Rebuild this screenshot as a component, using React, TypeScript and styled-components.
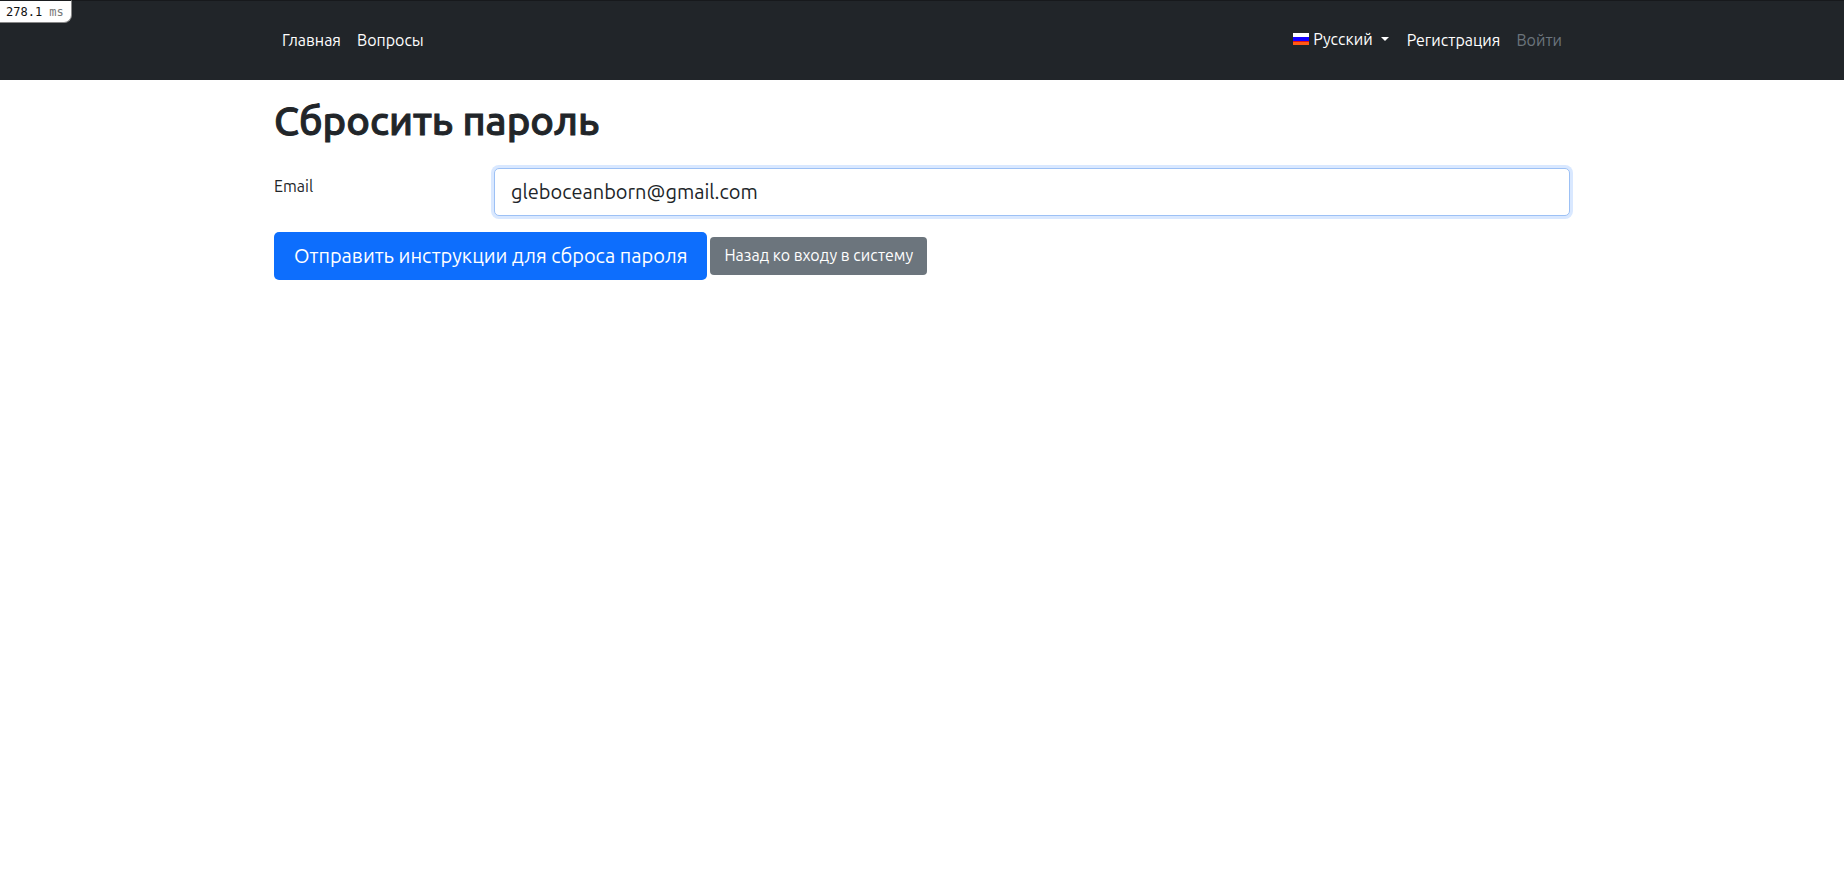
import React, { useState } from "react";
import styled, { createGlobalStyle } from "styled-components";

const GlobalStyle = createGlobalStyle`
  *, *::before, *::after { box-sizing: border-box; }
  body {
    margin: 0;
    background: #fff;
    color: #212529;
    font-family: Ubuntu, "Noto Sans", "Open Sans", sans-serif;
    font-size: 16px;
    line-height: 24px;
  }
`;

const Container = styled.div`
  width: 100%;
  max-width: 1320px;
  margin: 0 auto;
  padding: 0 12px;
`;

const ProfilerBadge = styled.div`
  position: absolute;
  top: 0;
  left: 0;
  padding: 4px 7px 3px 6px;
  background: #fff;
  border: solid #888;
  border-width: 1px 1px 1px 0;
  border-top-color: #1b1d20;
  border-bottom-right-radius: 8px;
  color: #111;
  font-family: "DejaVu Sans Mono", monospace;
  font-size: 12px;
  line-height: 14px;
  white-space: pre;
`;

const Unit = styled.span`
  color: #777;
`;

const Navbar = styled.header`
  background: #212529;
  border-top: 1px solid #17191c;
`;

const NavInner = styled(Container)`
  display: flex;
  align-items: center;
  justify-content: space-between;
  padding-top: 19px;
  padding-bottom: 20px;
`;

const NavGroup = styled.nav`
  display: flex;
  align-items: center;
`;

const NavLink = styled.a<{ $muted?: boolean }>`
  padding: 8px;
  color: ${(p) => (p.$muted ? "#6c757d" : "#fff")};
  text-decoration: none;
`;

const LanguageToggle = styled.button`
  display: flex;
  align-items: center;
  padding: 7px 10px 9px 8px;
  border: 0;
  background: none;
  color: #fff;
  font: inherit;
  cursor: pointer;
`;

const Flag = styled.svg`
  width: 16px;
  height: 12px;
  margin-right: 4px;
`;

const Caret = styled.span`
  margin-left: 8px;
  border: 4px solid transparent;
  border-top-color: #fff;
  border-bottom: 0;
`;

const Title = styled.h1`
  margin: 17px 0 0;
  font-size: 40px;
  font-weight: 500;
  line-height: 48px;
  -webkit-text-stroke: 1px currentColor;
`;

const Field = styled.div`
  display: flex;
  gap: 24px;
  margin: 23px 0 16px;
`;

const Label = styled.label`
  flex: 0 0 calc((100% + 24px) / 6 - 24px);
  padding-top: 6px;
`;

const EmailInput = styled.input`
  flex: 1;
  min-width: 0;
  height: 48px;
  padding: 7px 16px 9px;
  border: 1px solid #9dc1f5;
  border-radius: 5px;
  outline: 0;
  box-shadow: 0 0 0 3px #d9e8ff;
  background: #fff;
  color: #212529;
  font: inherit;
  font-size: 20px;
  line-height: 30px;
`;

const Actions = styled.div`
  display: flex;
  align-items: center;
  gap: 3px;
`;

const SubmitButton = styled.button`
  height: 48px;
  padding: 0 20px;
  border: 0;
  border-radius: 5px;
  background: #0d6efd;
  color: #fff;
  font: inherit;
  font-size: 20px;
  line-height: 30px;
  cursor: pointer;
`;

const BackLink = styled.a`
  padding: 6px 14px 8px;
  border-radius: 4px;
  background: #6c757d;
  color: #fff;
  text-decoration: none;
`;

export default function App() {
  const [email, setEmail] = useState("gleboceanborn@gmail.com");

  return (
    <>
      <GlobalStyle />
      <Navbar>
        <NavInner>
          <NavGroup aria-label="Разделы">
            <NavLink href="#home">Главная</NavLink>
            <NavLink href="#questions">Вопросы</NavLink>
          </NavGroup>
          <NavGroup aria-label="Учётная запись">
            <LanguageToggle type="button" aria-haspopup="true">
              <Flag viewBox="0 0 16 12" shapeRendering="crispEdges" aria-hidden="true">
                <rect width="16" height="4" fill="#fff" />
                <rect y="4" width="16" height="4" fill="#1400ff" />
                <rect y="8" width="16" height="1" fill="#e31212" />
                <rect y="9" width="16" height="3" fill="#ff5a14" />
              </Flag>
              Русский
              <Caret />
            </LanguageToggle>
            <NavLink href="#sign-up">Регистрация</NavLink>
            <NavLink href="#sign-in" $muted>Войти</NavLink>
          </NavGroup>
        </NavInner>
      </Navbar>
      <Container as="main">
        <Title>Сбросить пароль</Title>
        <form onSubmit={(e) => e.preventDefault()}>
          <Field>
            <Label htmlFor="email">Email</Label>
            <EmailInput
              id="email"
              type="email"
              value={email}
              onChange={(e) => setEmail(e.target.value)}
            />
          </Field>
          <Actions>
            <SubmitButton type="submit">Отправить инструкции для сброса пароля</SubmitButton>
            <BackLink href="#sign-in">Назад ко входу в систему</BackLink>
          </Actions>
        </form>
      </Container>
      <ProfilerBadge>
        278.1 <Unit>ms</Unit>
      </ProfilerBadge>
    </>
  );
}
